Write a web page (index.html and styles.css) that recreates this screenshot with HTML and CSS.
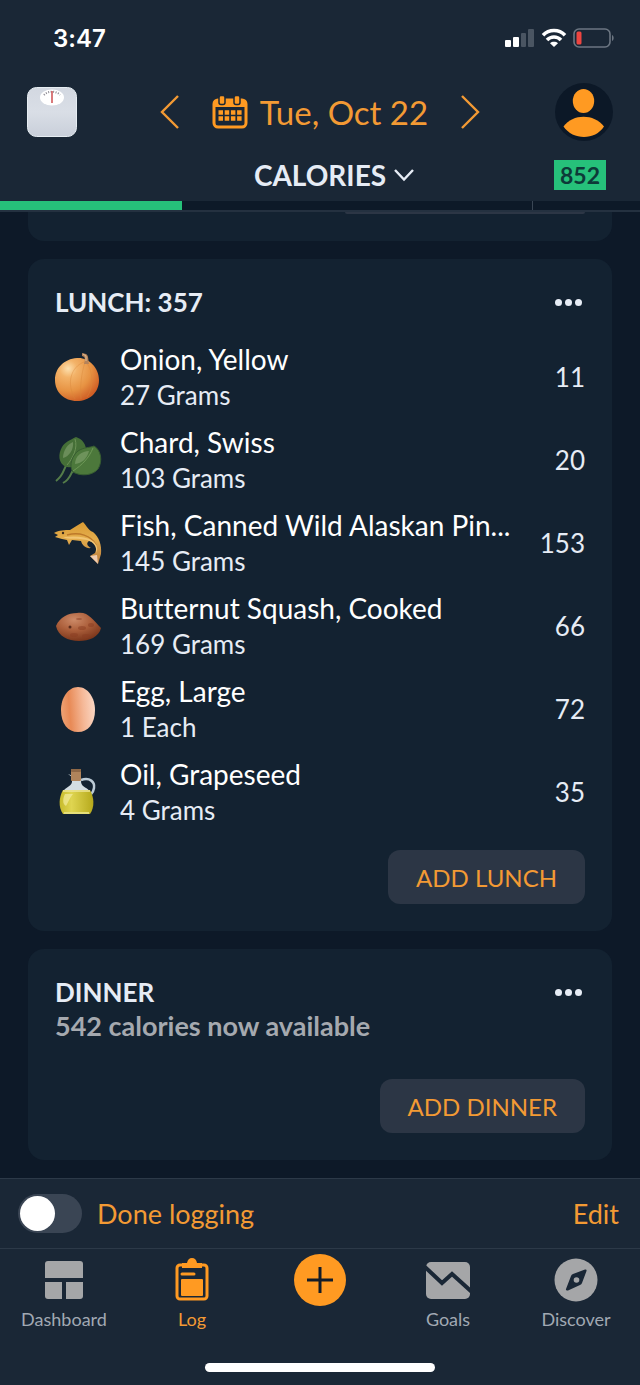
FILE: index.html
```
<!DOCTYPE html>
<html lang="en">
<head>
    <meta charset="UTF-8">
    <meta name="viewport" content="width=device-width, initial-scale=1.0">
    <title>Food Log</title>
    <link rel="stylesheet" href="styles.css">
</head>
<body>
    <header class="top">
        <div class="status">
            <span class="time">3:47</span>
            <div class="status-icons">
                <svg width="30" height="20" viewBox="0 0 30 20">
                    <rect x="0" y="12" width="6" height="7" rx="1" fill="#fff"/>
                    <rect x="8" y="9" width="6" height="10" rx="1" fill="#fff"/>
                    <rect x="16" y="5" width="5" height="14" rx="1" fill="#4a5562"/>
                    <rect x="23" y="1" width="6" height="18" rx="1" fill="#4a5562"/>
                </svg>
                <svg width="26" height="20" viewBox="0 0 26 20" fill="none" stroke="#fff" stroke-width="3.6">
                    <path d="M2 7.2C8 1 18 1 24 7.2"/>
                    <path d="M6 12C10 8 16 8 20 12"/>
                    <path d="M13 19L9 15.2C11.3 13.4 14.7 13.4 17 15.2z" fill="#fff" stroke="none"/>
                </svg>
                <svg width="41" height="20" viewBox="0 0 41 20">
                    <rect x="1" y="1" width="36" height="18" rx="5" fill="none" stroke="#6c7682" stroke-width="1.6"/>
                    <rect x="3.5" y="3.5" width="5" height="13" rx="1.5" fill="#ee4540"/>
                    <path d="M39 7C41.2 8 41.2 12 39 13z" fill="#6c7682"/>
                </svg>
            </div>
        </div>
        <div class="date-row">
            <button class="plain scale" aria-label="Weigh in">
                <svg width="50" height="50" viewBox="0 0 50 50">
                    <defs>
                        <linearGradient id="scaleFill" x1="0" y1="0" x2="0" y2="1">
                            <stop offset="0" stop-color="#d3d8e1"/>
                            <stop offset="0.5" stop-color="#d9dee6"/>
                            <stop offset="1" stop-color="#c9cfda"/>
                        </linearGradient>
                    </defs>
                    <rect x="0.5" y="0.5" width="49" height="49" rx="9" fill="url(#scaleFill)" stroke="#e6edf2"/>
                    <ellipse cx="25" cy="10.5" rx="12" ry="8" fill="#fff"/>
                    <path d="M17 8C21 3.5 29 3.5 33 8" fill="none" stroke="#8a8890" stroke-width="2" stroke-dasharray="1 1.5"/>
                    <path d="M25 4V16" stroke="#d0585a" stroke-width="1.6"/>
                </svg>
            </button>
            <div class="date-nav">
                <button class="plain" aria-label="Previous day">
                    <svg width="20" height="36" viewBox="0 0 20 36" fill="none" stroke="#f39a34" stroke-width="2.4"><path d="M18 2L2 18L18 34"/></svg>
                </button>
                <button class="plain date">
                    <svg width="36" height="34" viewBox="0 0 36 34">
                        <rect x="2" y="5" width="32" height="27" rx="4" fill="none" stroke="#ff9a22" stroke-width="3"/>
                        <path d="M2 5H34V12H2z" fill="#ff9a22"/>
                        <g fill="#ff9a22" stroke="#1a2736" stroke-width="1.5">
                            <rect x="7" y="0.5" width="6" height="9" rx="2"/>
                            <rect x="22" y="0.5" width="6" height="9" rx="2"/>
                        </g>
                        <path d="M6.5 17.500H30M6.5 23.500H30" stroke="#ff9a22" stroke-width="4.5" stroke-dasharray="4.5 1.700"/>
                    </svg>
                    <span>Tue, Oct 22</span>
                </button>
                <button class="plain" aria-label="Next day">
                    <svg width="20" height="36" viewBox="0 0 20 36" fill="none" stroke="#f39a34" stroke-width="2.4"><path d="M2 2L18 18L2 34"/></svg>
                </button>
            </div>
            <button class="plain avatar" aria-label="Profile">
                <svg width="58" height="58" viewBox="0 0 58 58">
                    <circle cx="29" cy="29" r="29" fill="#0c1827"/>
                    <ellipse cx="28.5" cy="18" rx="10.7" ry="12" fill="#ff9a22"/>
                    <path d="M8.5 43.5C18 30.5 39 30.5 49 43.5C40 57.5 18 57.5 8.5 43.5z" fill="#ff9a22"/>
                </svg>
            </button>
        </div>
        <div class="metric-row">
            <button class="plain metric">
                <span>CALORIES</span>
                <svg width="20" height="14" viewBox="0 0 20 14" fill="none" stroke="#e6ecf5" stroke-width="2.4"><path d="M1 2L10 11.500L19 2"/></svg>
            </button>
            <span class="badge">852</span>
        </div>
        <div class="progress">
            <div class="done" style="width: 28.4%"></div>
            <div class="tick" style="left: 83.1%"></div>
        </div>
    </header>

    <main class="meals">
        <section class="card previous">
            <div class="button-edge"></div>
        </section>

        <section class="card">
            <div class="card-head">
                <h2>LUNCH: 357</h2>
                <button class="plain more" aria-label="Lunch options"><i></i><i></i><i></i></button>
            </div>
            <ul class="foods">
                <li>
                    <svg class="food-icon" viewBox="0 0 48 48">
                        <defs>
                            <radialGradient id="onion" cx="0.3" cy="0.25" r="0.8">
                                <stop offset="0" stop-color="#fde0ae"/>
                                <stop offset="0.25" stop-color="#f3b369"/>
                                <stop offset="0.65" stop-color="#e79343"/>
                                <stop offset="1" stop-color="#cf5e25"/>
                            </radialGradient>
                        </defs>
                        <path d="M22 5C33 4 44 14 44 27C44 40 34 48 22 48C9 48 0 39 0 27C0 15 9 6 22 5z" fill="url(#onion)"/>
                        <path d="M29 9C16 14 11 30 20 46M30 9C26 22 25 34 26 46M31 9C39 18 38 36 32 44" fill="none" stroke="#d98639" stroke-width="0.7" opacity="0.6"/>
                        <path d="M27 0L31 1C34 3 33 7 34 11L29 11C30 7 31 4 27 3z" fill="#b5835a"/>
                        <path d="M28 1L31 3L31 8" fill="none" stroke="#e0bd94" stroke-width="1"/>
                    </svg>
                    <div class="food"><span class="name">Onion, Yellow</span><span class="amount">27 Grams</span></div>
                    <span class="count">11</span>
                </li>
                <li>
                    <svg class="food-icon" viewBox="0 0 48 48">
                        <path d="M12 28C8 34 9 39 1 45M19 34C15 36 17 42 8 47" fill="none" stroke="#547c49" stroke-width="2"/>
                        <path d="M21 1C27 3 32 8 31 17C29 27 22 32 11 31C3 27 3 18 7 11C10 6 15 4 21 1z" fill="#456f37"/>
                        <path d="M20 3C23 12 18 22 12 29" fill="none" stroke="#6b9156" stroke-width="1"/>
                        <path d="M8 22C8 14 13 8 18 6C19 13 14 21 8 22z" fill="#7a9a69" opacity="0.7"/>
                        <path d="M39 10C46 14 48 25 43 33C38 39 27 41 18 36C13 29 18 19 23 15C29 11 34 12 39 10z" fill="#4c783b" stroke="#375d31"/>
                        <path d="M38 12C34 22 27 29 18 35" fill="none" stroke="#6e9957" stroke-width="1"/>
                        <path d="M20 28C20 20 27 15 34 15C32 23 27 27 20 28z" fill="#779a64" opacity="0.8"/>
                    </svg>
                    <div class="food"><span class="name">Chard, Swiss</span><span class="amount">103 Grams</span></div>
                    <span class="count">20</span>
                </li>
                <li>
                    <svg class="food-icon" viewBox="0 0 48 48">
                        <defs>
                            <linearGradient id="fish" x1="0" y1="0" x2="0" y2="1">
                                <stop offset="0" stop-color="#d99a32"/>
                                <stop offset="0.4" stop-color="#e4ad4c"/>
                                <stop offset="1" stop-color="#b87b3d"/>
                            </linearGradient>
                        </defs>
                        <path d="M-1 14C4 11 10 11 15 11L23 6L28 3C32 7 33 11 38 13C44 18 47 26 46 35L43 45L35 37L40 34C43 28 40 23 34 22C31 24 32 27 36 29C31 30 27 26 26 22L17 21L14 26L12 21L7 20L0 18L3 16z" fill="url(#fish)"/>
                        <path d="M12 16C24 13 36 16 41 26" fill="none" stroke="#bd792a" stroke-width="1.5"/>
                        <path d="M8 18C20 17 30 17 38 22C43 27 43 31 41 34C42 28 39 23 32 21C22 19 14 21 8 18z" fill="#f1c574"/>
                        <path d="M35 37L42 36L43 45z" fill="#f0cdb0"/>
                        <circle cx="8" cy="14" r="1.2" fill="#3a2a1b"/>
                    </svg>
                    <div class="food"><span class="name">Fish, Canned Wild Alaskan Pin...</span><span class="amount">145 Grams</span></div>
                    <span class="count">153</span>
                </li>
                <li>
                    <svg class="food-icon" viewBox="0 0 48 48">
                        <defs>
                            <radialGradient id="squash" cx="0.4" cy="0.25" r="0.75">
                                <stop offset="0" stop-color="#cc8a68"/>
                                <stop offset="0.5" stop-color="#ac5f3b"/>
                                <stop offset="1" stop-color="#7c371c"/>
                            </radialGradient>
                        </defs>
                        <path d="M1 24C5 15 13 11 22 11C33 9 38 18 46 26C44 35 34 39 24 39C13 39 3 34 1 24z" fill="url(#squash)"/>
                        <g fill="#8a3d22" opacity="0.5"><ellipse cx="27" cy="26" rx="4" ry="2"/><ellipse cx="36" cy="23" rx="3" ry="2"/><ellipse cx="19" cy="33" rx="4" ry="2"/><ellipse cx="31" cy="34" rx="4" ry="2"/><ellipse cx="24" cy="17" rx="3" ry="1"/></g>
                        <circle cx="15" cy="25" r="1.5" fill="#5c2c1c"/>
                    </svg>
                    <div class="food"><span class="name">Butternut Squash, Cooked</span><span class="amount">169 Grams</span></div>
                    <span class="count">66</span>
                </li>
                <li>
                    <svg class="food-icon" viewBox="0 0 48 48">
                        <defs>
                            <linearGradient id="egg" x1="0" y1="0.5" x2="1" y2="0.4">
                                <stop offset="0" stop-color="#eda274"/>
                                <stop offset="0.25" stop-color="#e88a56"/>
                                <stop offset="0.65" stop-color="#f5b897"/>
                                <stop offset="1" stop-color="#fbd8c5"/>
                            </linearGradient>
                        </defs>
                        <path d="M23 2C33 2 40 13 40 25C40 39 33 47 23 47C13 47 6 39 6 25C6 13 13 2 23 2z" fill="url(#egg)"/>
                    </svg>
                    <div class="food"><span class="name">Egg, Large</span><span class="amount">1 Each</span></div>
                    <span class="count">72</span>
                </li>
                <li>
                    <svg class="food-icon" viewBox="0 0 48 48">
                        <defs>
                            <linearGradient id="oil" x1="0" y1="0" x2="1" y2="0">
                                <stop offset="0" stop-color="#c6ba2b"/>
                                <stop offset="0.35" stop-color="#dfd551"/>
                                <stop offset="1" stop-color="#b6a91c"/>
                            </linearGradient>
                        </defs>
                        <path d="M26 12C35 9 40 14 39 20C38 26 36 25 34 29" fill="none" stroke="#bccbd6" stroke-width="2.5"/>
                        <path d="M13 6L17 9V14C16 19 10 19 8 24H35C33 19 27 20 26 14V8H18z" fill="#d3dde2"/>
                        <rect x="16" y="1" width="10" height="12" rx="1" fill="#b0845b"/>
                        <rect x="16" y="1" width="10" height="3" rx="1" fill="#8f6846"/>
                        <path d="M8 22H35C39 29 40 39 35 46H8C3 39 4 29 8 22z" fill="url(#oil)"/>
                        <path d="M8 23H35" stroke="#eee698" stroke-width="1.5"/>
                        <path d="M10 26H18C14 31 13 35 11 38C7 36 8 30 10 26z" fill="#f4eda0" opacity="0.7"/>
                        <path d="M9 45H34" stroke="#e6df79" stroke-width="2"/>
                    </svg>
                    <div class="food"><span class="name">Oil, Grapeseed</span><span class="amount">4 Grams</span></div>
                    <span class="count">35</span>
                </li>
            </ul>
            <button class="add">ADD LUNCH</button>
        </section>

        <section class="card">
            <div class="card-head">
                <h2>DINNER</h2>
                <button class="plain more" aria-label="Dinner options"><i></i><i></i><i></i></button>
            </div>
            <p class="available">542 calories now available</p>
            <button class="add">ADD DINNER</button>
        </section>
    </main>

    <footer class="bottom">
        <div class="done-row">
            <input type="checkbox" class="switch" id="doneLogging">
            <label for="doneLogging">Done logging</label>
            <button class="plain edit">Edit</button>
        </div>
        <nav class="tabs">
            <a href="#">
                <svg width="40" height="52" viewBox="0 0 40 52" fill="#a5a6a8">
                    <path d="M4 7H36Q39 7 39 10V24H1V10Q1 7 4 7z"/>
                    <path d="M1 28H18V45H4Q1 45 1 42z"/>
                    <path d="M22 28H39V42Q39 45 36 45H22z"/>
                </svg>
                <span>Dashboard</span>
            </a>
            <a href="#" class="active">
                <svg width="34" height="52" viewBox="0 0 34 52">
                    <rect x="2" y="11" width="30" height="34" rx="3" fill="none" stroke="#ff9a22" stroke-width="3"/>
                    <path d="M7 9H12Q13 4 17 4Q21 4 22 9H27V14H7z" fill="#ff9a22"/>
                    <path d="M7 20H19" stroke="#ff9a22" stroke-width="3" stroke-linecap="round"/>
                    <rect x="6" y="25" width="22" height="17" rx="1" fill="#ff9a22"/>
                </svg>
                <span>Log</span>
            </a>
            <a href="#" aria-label="Add">
                <svg width="52" height="52" viewBox="0 0 52 52">
                    <circle cx="26" cy="26" r="26" fill="#ff9a22"/>
                    <path d="M26 13V39M13 26H39" stroke="#131c28" stroke-width="3"/>
                </svg>
            </a>
            <a href="#">
                <svg width="44" height="52" viewBox="0 0 44 52">
                    <rect x="0" y="8" width="44" height="37" rx="5" fill="#a5a6a8"/>
                    <path d="M-2 12L16 29L26 20L46 38" fill="none" stroke="#1a2736" stroke-width="4"/>
                </svg>
                <span>Goals</span>
            </a>
            <a href="#">
                <svg width="44" height="52" viewBox="0 0 44 52">
                    <circle cx="22" cy="26" r="21.5" fill="#a5a6a8"/>
                    <path d="M31 15.500Q33 15 32.500 17L28 29Q27.500 30.500 26 31L14 36.500Q11.500 37 12 35L17 22Q17.500 20.500 19 20z" fill="#1a2736"/>
                    <circle cx="22.5" cy="26" r="2.8" fill="#a5a6a8"/>
                </svg>
                <span>Discover</span>
            </a>
        </nav>
        <div class="home-bar"></div>
    </footer>
</body>
</html>
```
FILE: styles.css
```
*{
    box-sizing: border-box;
}
body{
    margin: 0;
    min-height: 100vh;
    display: flex;
    flex-direction: column;
    background-color: #0d1928;
    color: #e6ecf5;
    font-family: Lato, "Open Sans", sans-serif;
    font-size: 26px;
    font-variant-ligatures: none;
}
button{
    font-family: inherit;
    font-size: inherit;
    cursor: pointer;
}
svg{
    display: block;
    flex: none;
}
.plain{
    background: none;
    border: 0;
    padding: 0;
    color: inherit;
}

/* header */
.top{
    background-color: #1a2736;
    border-bottom: 2px solid #243140;
}
.status{
    height: 76px;
    padding: 0 26px 0 53px;
    display: flex;
    align-items: center;
    justify-content: space-between;
}
.time{
    font-family: Inter, sans-serif;
    font-size: 24px;
    font-weight: 600;
    color: #fff;
}
.status-icons{
    display: flex;
    gap: 6px;
}
.date-row{
    height: 72px;
    padding: 0 27px;
    display: grid;
    grid-template-columns: 1fr auto 1fr;
    align-items: center;
}
.avatar{
    justify-self: end;
}
.scale{
    justify-self: start;
}
.date-nav{
    display: flex;
    align-items: center;
    gap: 32px;
    color: #f39a34;
}
.date{
    display: flex;
    align-items: center;
    gap: 12px;
    font-size: 33px;
}
.metric-row{
    height: 53px;
    padding: 0 34px;
    display: grid;
    grid-template-columns: 1fr auto 1fr;
    align-items: center;
}
.metric{
    grid-column: 2;
    display: flex;
    align-items: center;
    gap: 8px;
    padding-left: 28px;
    font-size: 28px;
    font-weight: bold;
}
.badge{
    justify-self: end;
    padding: 0 6px;
    background-color: #26c17a;
    color: #0d3a38;
    font-size: 23px;
    line-height: 30px;
    font-weight: bold;
}
.progress{
    position: relative;
    height: 9px;
    background-color: #0d1928;
}
.done{
    height: 100%;
    background-color: #26c17a;
}
.tick{
    position: absolute;
    top: 0;
    width: 1px;
    height: 100%;
    background-color: #3a4655;
}

/* meals */
.meals{
    flex: 1;
    display: flex;
    flex-direction: column;
    gap: 18px;
    padding: 0 28px 17px;
}
.card{
    display: flex;
    flex-direction: column;
    padding: 27px;
    background-color: #132231;
    border-radius: 16px;
}
.previous{
    padding-top: 0;
    border-radius: 0 0 16px 16px;
}
.button-edge{
    align-self: flex-end;
    width: 240px;
    height: 2px;
    background-color: #2c3645;
    border-radius: 0 0 12px 12px;
}
.card-head{
    display: flex;
    align-items: center;
    justify-content: space-between;
    height: 32px;
}
h2{
    margin: 0;
    font-size: 26px;
}
.more{
    display: flex;
    gap: 3px;
    padding: 12px 3px;
}
.more i{
    width: 7px;
    height: 7px;
    border-radius: 50%;
    background-color: #e6ecf5;
}
.foods{
    list-style: none;
    margin: 17px 0;
    padding: 0;
}
.foods li{
    display: flex;
    align-items: center;
    gap: 17px;
    height: 83px;
}
.food-icon{
    width: 48px;
    height: 48px;
    overflow: visible;
}
.food{
    flex: 1;
    min-width: 0;
    line-height: 36px;
}
.name, .amount{
    display: block;
    white-space: nowrap;
}
.name{
    font-size: 28px;
    color: #fff;
}
.count{
    font-size: 26px;
}
.add{
    align-self: flex-end;
    height: 54px;
    padding: 0 28px;
    border: 0;
    border-radius: 12px;
    background-color: #2c3645;
    color: #f39a34;
    font-size: 24px;
}
.available{
    margin: 0 0 35px;
    font-size: 27px;
    line-height: 36px;
    font-weight: bold;
    color: #a5a9af;
}

/* footer */
.bottom{
    background-color: #1a2736;
    border-top: 1px solid #2c3948;
}
.done-row{
    display: flex;
    align-items: center;
    gap: 15px;
    height: 70px;
    padding: 0 21px 0 18px;
    border-bottom: 1px solid #2c3948;
    color: #f39a34;
    font-size: 27px;
}
.switch{
    appearance: none;
    flex: none;
    width: 64px;
    height: 39px;
    margin: 0;
    padding: 2px;
    border-radius: 20px;
    background-color: #3a4554;
}
.switch::before{
    content: "";
    display: block;
    width: 35px;
    height: 35px;
    border-radius: 50%;
    background-color: #fff;
}
.switch:checked::before{
    margin-left: auto;
}
.edit{
    margin-left: auto;
}
.tabs{
    display: grid;
    grid-template-columns: repeat(5, 1fr);
    padding-top: 5px;
}
.tabs a{
    display: flex;
    flex-direction: column;
    align-items: center;
    color: #a1a9b3;
    font-size: 18px;
    line-height: 26px;
    text-decoration: none;
}
.tabs .active{
    color: #f39a34;
}
.home-bar{
    width: 36%;
    height: 9px;
    margin: 31px auto 13px;
    border-radius: 5px;
    background-color: #fff;
}
```
